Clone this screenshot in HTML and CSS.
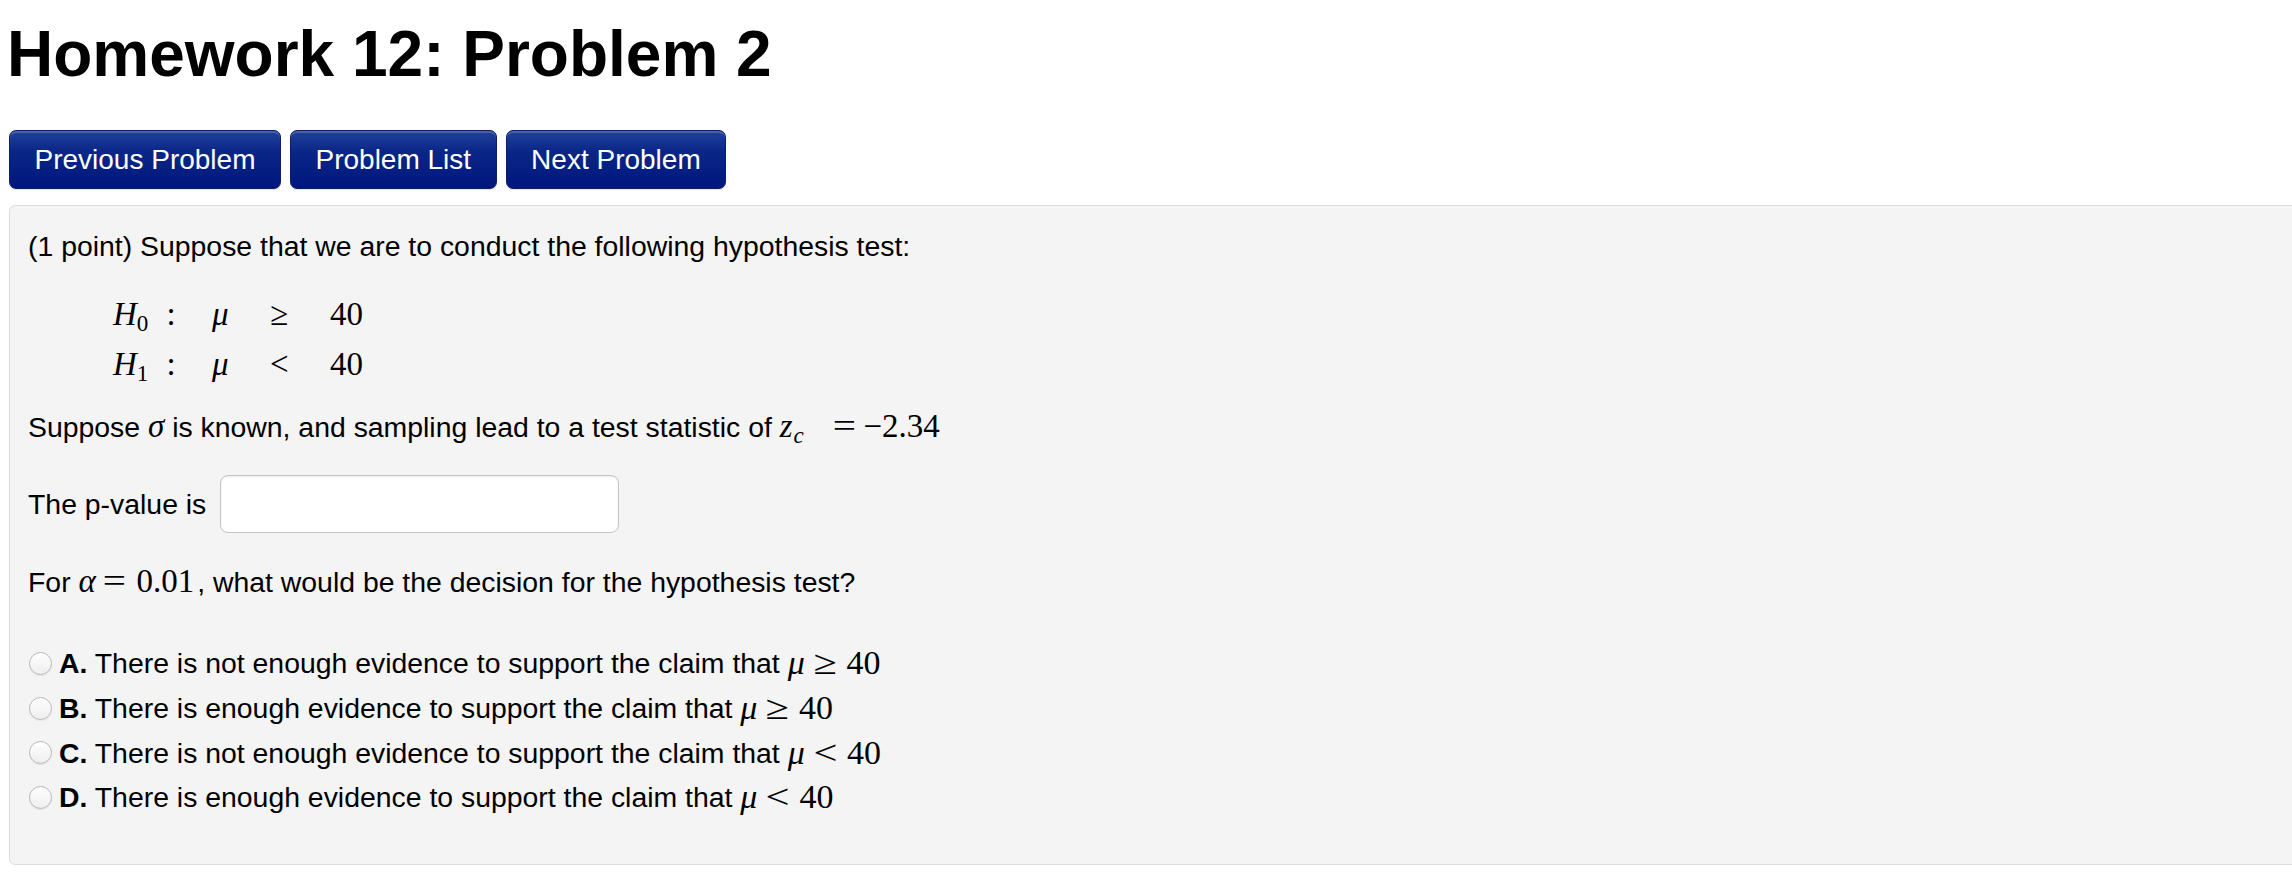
FILE: index.html
```html
<!DOCTYPE html>
<html lang="en">
<head>
<meta charset="utf-8">
<title>Homework 12: Problem 2</title>
<link rel="stylesheet" href="styles.css">
</head>
<body>
<div class="page">
  <h1 class="title">Homework 12: Problem 2</h1>
  <nav class="nav">
    <button class="btn" type="button">Previous Problem</button>
    <button class="btn" type="button">Problem List</button>
    <button class="btn" type="button">Next Problem</button>
  </nav>
  <div class="panel">
    <p class="line intro">(1 point) Suppose that we are to conduct the following hypothesis test:</p>
    <div class="hyp">
      <span class="cell"><i>H</i><sub>0</sub><span class="colon">:</span></span>
      <span class="cell"><i>μ</i></span>
      <span class="cell">≥</span>
      <span class="cell">40</span>
      <span class="cell"><i>H</i><sub>1</sub><span class="colon">:</span></span>
      <span class="cell"><i>μ</i></span>
      <span class="cell">&lt;</span>
      <span class="cell">40</span>
    </div>
    <p class="line stat">Suppose <span class="math"><i>σ</i></span> is known, and sampling lead to a test statistic of <span class="math"><i>z</i><sub class="sub-c"><i>c</i></sub><span class="rel rel-z">=</span>−2.34</span></p>
    <div class="answer">
      <span>The p-value is</span>
      <input class="ans-input" type="text" aria-label="p-value">
    </div>
    <p class="line alpha">For <span class="math"><i>α</i><span class="rel rel-a">=</span><span class="num">0.01</span></span>, what would be the decision for the hypothesis test?</p>
    <ul class="options">
      <li class="opt"><span class="radio"></span><b>A.</b> There is not enough evidence to support the claim that <span class="math"><i>μ</i><span class="rel rel-o">≥</span>40</span></li>
      <li class="opt"><span class="radio"></span><b>B.</b> There is enough evidence to support the claim that <span class="math"><i>μ</i><span class="rel rel-o">≥</span>40</span></li>
      <li class="opt"><span class="radio"></span><b>C.</b> There is not enough evidence to support the claim that <span class="math"><i>μ</i><span class="rel rel-o">&lt;</span>40</span></li>
      <li class="opt"><span class="radio"></span><b>D.</b> There is enough evidence to support the claim that <span class="math"><i>μ</i><span class="rel rel-o">&lt;</span>40</span></li>
    </ul>
  </div>
</div>
</body>
</html>
```
FILE: styles.css
```css
html, body {
  margin: 0;
  padding: 0;
  background: #ffffff;
  overflow: hidden;
}

.page {
  padding: 0 9px;
  font-family: "Liberation Sans", Arial, Helvetica, sans-serif;
  color: #000;
}

.title {
  margin: 22px 0 0 -2px;
  font-size: 64px;
  line-height: 64px;
  font-weight: bold;
}

.nav {
  display: flex;
  gap: 9px;
  margin-top: 44px;
}

.btn {
  height: 59px;
  padding: 0 24.5px;
  font-family: "Liberation Sans", Arial, Helvetica, sans-serif;
  font-size: 28px;
  color: #ffffff;
  border: 1px solid #0b1f6a;
  border-radius: 7px;
  background: linear-gradient(#21409a 0%, #0a2788 35%, #00167d 100%);
  box-shadow: inset 0 2px 0 rgba(255, 255, 255, 0.18), 0 1px 1px rgba(0, 0, 0, 0.12);
}

.panel {
  margin: 16px -40px 0 0;
  padding: 20px 18px 0;
  height: 638px;
  background: #f4f4f4;
  border: 1px solid #dcdcdc;
  border-radius: 6px;
  font-size: 28.4px;
  line-height: 40px;
}

.line {
  margin: 0;
}

.math {
  font-family: "Liberation Serif", "Times New Roman", serif;
  font-size: 33px;
  line-height: 1;
}

sub {
  font-size: 0.7em;
  line-height: 0;
  vertical-align: -0.25em;
}

.sub-c {
  margin-left: 1px;
}

.rel {
  display: inline-block;
  transform: scaleX(1.25);
}

.rel-z {
  margin: 0 10px 0 31px;
}

.rel-a {
  margin: 0 13px 0 9px;
}

.num {
  margin-right: 3px;
}

.rel-o {
  margin: 0 12px 0 11px;
}

.opt .math {
  font-size: 34px;
}

.hyp {
  display: grid;
  grid-template-columns: 99px 58px 60px auto;
  margin: 23px 0 0 85px;
  font-family: "Liberation Serif", "Times New Roman", serif;
  font-size: 33px;
  line-height: 50px;
}

.colon {
  margin-left: 18px;
}

.stat {
  margin-top: 18px;
}

.answer {
  display: flex;
  align-items: center;
  gap: 14px;
  margin-top: 28px;
}

.ans-input {
  width: 399px;
  height: 58px;
  box-sizing: border-box;
  border: 1px solid #c4c4c4;
  border-radius: 8px;
  background: #ffffff;
  box-shadow: inset 0 1px 2px rgba(0, 0, 0, 0.08);
  font-size: 28px;
}

.alpha {
  margin-top: 29px;
}

.options {
  list-style: none;
  margin: 39px 0 0;
  padding: 0;
}

.opt {
  display: flex;
  align-items: center;
  height: 44.7px;
  white-space: pre;
}

.radio {
  width: 23px;
  height: 23px;
  box-sizing: border-box;
  margin: 0 7px 0 1px;
  border: 1px solid #b8b8b8;
  border-radius: 50%;
  background: linear-gradient(#ffffff, #eeeeee);
  box-shadow: 0 1px 1px rgba(0, 0, 0, 0.06);
}
```
